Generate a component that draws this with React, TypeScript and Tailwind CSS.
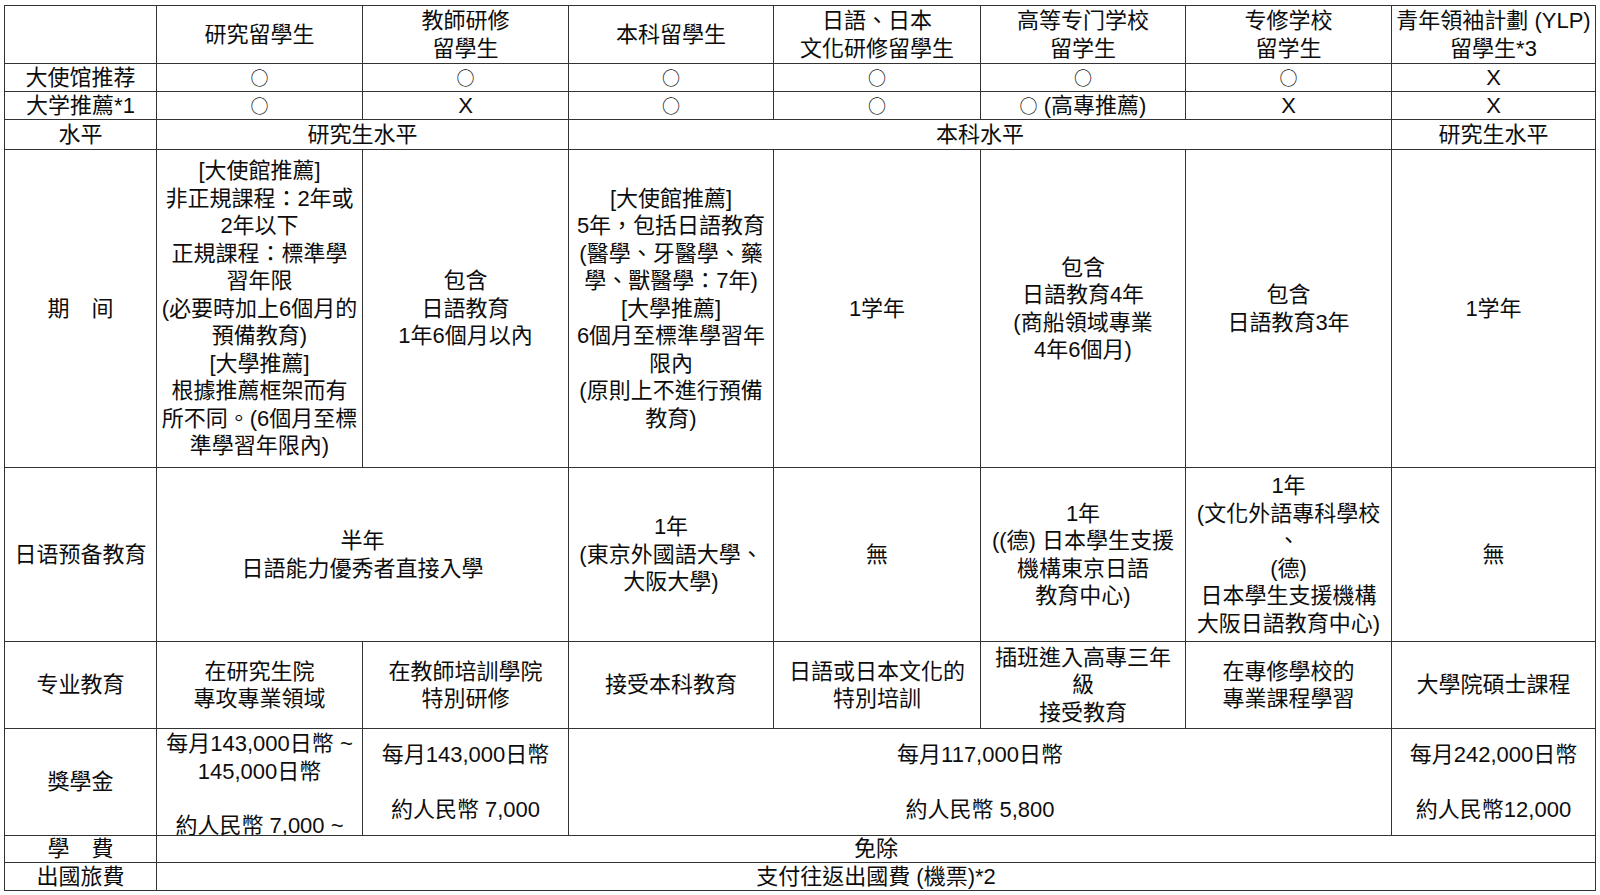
import React from "react";

type Cell = {
  lines: string[];
  span?: "2" | "4" | "7";
  top?: boolean;
};

const font = { fontFamily: '"Liberation Sans", "Noto Sans CJK TC", sans-serif' };

const rows: Cell[][] = [
  [
    { lines: [""] },
    { lines: ["研究留學生"] },
    { lines: ["教師研修", "留學生"] },
    { lines: ["本科留學生"] },
    { lines: ["日語、日本", "文化研修留學生"] },
    { lines: ["高等专门学校", "留学生"] },
    { lines: ["专修学校", "留学生"] },
    { lines: ["青年領袖計劃 (YLP)", "留學生*3"] },
  ],
  [
    { lines: ["大使馆推荐"] },
    { lines: ["○"] },
    { lines: ["○"] },
    { lines: ["○"] },
    { lines: ["○"] },
    { lines: ["○"] },
    { lines: ["○"] },
    { lines: ["X"] },
  ],
  [
    { lines: ["大学推薦*1"] },
    { lines: ["○"] },
    { lines: ["X"] },
    { lines: ["○"] },
    { lines: ["○"] },
    { lines: ["○ (高專推薦)"] },
    { lines: ["X"] },
    { lines: ["X"] },
  ],
  [
    { lines: ["水平"] },
    { lines: ["研究生水平"], span: "2" },
    { lines: ["本科水平"], span: "4" },
    { lines: ["研究生水平"] },
  ],
  [
    { lines: ["期　间"] },
    {
      lines: [
        "[大使館推薦]",
        "非正規課程：2年或",
        "2年以下",
        "正規課程：標準學",
        "習年限",
        "(必要時加上6個月的",
        "預備教育)",
        "[大學推薦]",
        "根據推薦框架而有",
        "所不同。(6個月至標",
        "準學習年限內)",
      ],
    },
    { lines: ["包含", "日語教育", "1年6個月以內"] },
    {
      lines: [
        "[大使館推薦]",
        "5年，包括日語教育",
        "(醫學、牙醫學、藥",
        "學、獸醫學：7年)",
        "[大學推薦]",
        "6個月至標準學習年",
        "限內",
        "(原則上不進行預備",
        "教育)",
      ],
    },
    { lines: ["1学年"] },
    { lines: ["包含", "日語教育4年", "(商船領域專業", "4年6個月)"] },
    { lines: ["包含", "日語教育3年"] },
    { lines: ["1学年"] },
  ],
  [
    { lines: ["日语预备教育"] },
    { lines: ["半年", "日語能力優秀者直接入學"], span: "2" },
    { lines: ["1年", "(東京外國語大學、", "大阪大學)"] },
    { lines: ["無"] },
    { lines: ["1年", "((德) 日本學生支援", "機構東京日語", "教育中心)"] },
    {
      lines: ["1年", "(文化外語專科學校", "、", "(德)", "日本學生支援機構", "大阪日語教育中心)"],
    },
    { lines: ["無"] },
  ],
  [
    { lines: ["专业教育"] },
    { lines: ["在研究生院", "專攻專業領域"] },
    { lines: ["在教師培訓學院", "特別研修"] },
    { lines: ["接受本科教育"] },
    { lines: ["日語或日本文化的", "特別培訓"] },
    { lines: ["插班進入高專三年", "級", "接受教育"] },
    { lines: ["在專修學校的", "專業課程學習"] },
    { lines: ["大學院碩士課程"] },
  ],
  [
    { lines: ["獎學金"] },
    // overflows its cell in the original, the last line is clipped
    { lines: ["每月143,000日幣 ~", "145,000日幣", "", "約人民幣 7,000 ~"], top: true },
    { lines: ["每月143,000日幣", "", "約人民幣 7,000"] },
    { lines: ["每月117,000日幣", "", "約人民幣 5,800"], span: "4" },
    { lines: ["每月242,000日幣", "", "約人民幣12,000"] },
  ],
  [
    { lines: ["學　費"] },
    { lines: ["免除"], span: "7" },
  ],
  [
    { lines: ["出國旅費"] },
    { lines: ["支付往返出國費 (機票)*2"], span: "7" },
  ],
];

const spanClass = {
  "2": "col-span-2",
  "4": "col-span-4",
  "7": "col-span-7",
};

// the circle mark comes from the CJK face, a bit smaller than the text
function Line({ text }: { text: string }) {
  if (!text.startsWith("○")) return <>{text}</>;
  return (
    <>
      <span className="text-[18px]" style={{ fontFamily: '"Noto Sans CJK TC", sans-serif' }}>
        ○
      </span>
      {text.slice(1)}
    </>
  );
}

function TableCell({ cell }: { cell: Cell }) {
  return (
    <div
      className={`flex flex-col items-center border-r border-b border-[#333] text-center ${
        cell.top ? "justify-start overflow-hidden pt-[1px]" : "justify-center"
      } ${cell.span ? spanClass[cell.span] : ""}`}
    >
      {cell.lines.map((line, i) => (
        <div key={i} className="min-h-[27px] shrink-0 whitespace-nowrap leading-[27.5px]">
          <Line text={line} />
        </div>
      ))}
    </div>
  );
}

export default function App() {
  return (
    <div className="h-[895px] w-[1600px] bg-white pl-[4px] pt-[5px] text-[22px] text-[#0d0d0d]" style={font}>
      <div className="grid w-max grid-cols-[152px_206px_206px_205px_207px_205px_206px_204px] grid-rows-[58px_28px_28px_30px_318px_174px_87px_107px_27px_28px] border-t border-l border-[#333]">
        {rows.map((row, r) => row.map((cell, c) => <TableCell key={`${r}-${c}`} cell={cell} />))}
      </div>
    </div>
  );
}
